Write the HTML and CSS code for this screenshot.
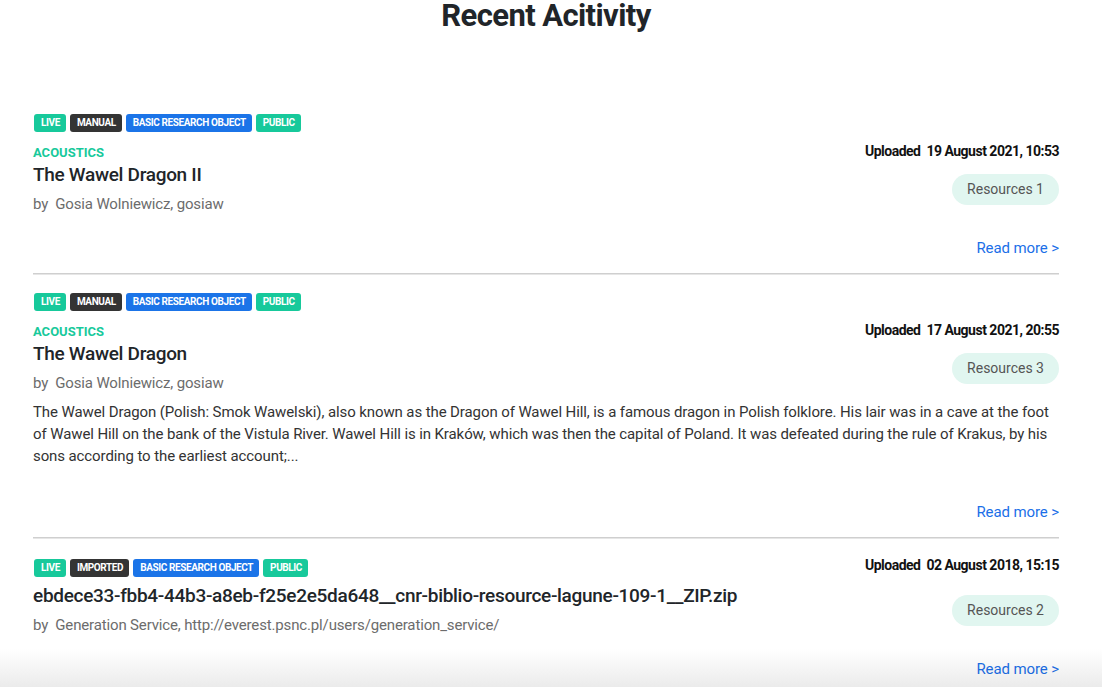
FILE: index.html
```html
<!DOCTYPE html>
<html lang="en">
<head>
<meta charset="utf-8">
<title>Recent Acitivity</title>
<link rel="stylesheet" href="styles.css">
</head>
<body>
<div class="page">
<h1 class="page-title">Recent Acitivity</h1>
<main class="feed">
  <article class="item">
    <div class="item-head">
      <div class="item-main">
        <div class="badges">
          <span class="badge badge-green">Live</span>
          <span class="badge badge-dark">Manual</span>
          <span class="badge badge-blue">Basic Research Object</span>
          <span class="badge badge-green">Public</span>
        </div>
        <div class="category">Acoustics</div>
        <h2 class="item-title">The Wawel Dragon II</h2>
        <p class="byline">by&nbsp; Gosia Wolniewicz, gosiaw</p>
      </div>
      <div class="item-meta">
        <div class="uploaded">Uploaded&nbsp; 19 August 2021, 10:53</div>
        <span class="resources">Resources 1</span>
      </div>
    </div>
    <div class="item-foot item-foot-short"><a class="read-more" href="#">Read more &gt;</a></div>
  </article>
  <hr class="divider">
  <article class="item">
    <div class="item-head">
      <div class="item-main">
        <div class="badges">
          <span class="badge badge-green">Live</span>
          <span class="badge badge-dark">Manual</span>
          <span class="badge badge-blue">Basic Research Object</span>
          <span class="badge badge-green">Public</span>
        </div>
        <div class="category">Acoustics</div>
        <h2 class="item-title">The Wawel Dragon</h2>
        <p class="byline">by&nbsp; Gosia Wolniewicz, gosiaw</p>
      </div>
      <div class="item-meta">
        <div class="uploaded">Uploaded&nbsp; 17 August 2021, 20:55</div>
        <span class="resources">Resources 3</span>
      </div>
    </div>
    <p class="desc">The Wawel Dragon (Polish: Smok Wawelski), also known as the Dragon of Wawel Hill, is a famous dragon in Polish folklore. His lair was in a cave at the foot of Wawel Hill on the bank of the Vistula River. Wawel Hill is in Kraków, which was then the capital of Poland. It was defeated during the rule of Krakus, by his sons according to the earliest account;...</p>
    <div class="item-foot"><a class="read-more" href="#">Read more &gt;</a></div>
  </article>
  <hr class="divider">
  <article class="item">
    <div class="item-head">
      <div class="item-main">
        <div class="badges">
          <span class="badge badge-green">Live</span>
          <span class="badge badge-dark">Imported</span>
          <span class="badge badge-blue">Basic Research Object</span>
          <span class="badge badge-green">Public</span>
        </div>
        <h2 class="item-title item-title-nocat">ebdece33-fbb4-44b3-a8eb-f25e2e5da648__cnr-biblio-resource-lagune-109-1__ZIP.zip</h2>
        <p class="byline">by&nbsp; Generation Service, http://everest.psnc.pl/users/generation_service/</p>
      </div>
      <div class="item-meta item-meta-wide">
        <div class="uploaded">Uploaded&nbsp; 02 August 2018, 15:15</div>
        <span class="resources">Resources 2</span>
      </div>
    </div>
    <div class="item-foot item-foot-short"><a class="read-more" href="#">Read more &gt;</a></div>
  </article>
</main>
</div>
<div class="fade"></div>
</body>
</html>
```

FILE: styles.css
```css
html, body {
  margin: 0;
  padding: 0;
  background: #ffffff;
}

body {
  font-family: Roboto, "Liberation Sans", Arial, sans-serif;
  color: #212529;
}

.page {
  margin: 0 43px 0 33px;
}

.page-title {
  margin: 0;
  font-size: 31px;
  line-height: 32px;
  font-weight: 700;
  text-align: center;
  color: #212529;
  letter-spacing: -0.6px;
}

.feed {
  margin-top: 82px;
}

.item-head {
  display: flex;
  justify-content: space-between;
  align-items: flex-end;
}

.item-main {
  display: flex;
  flex-direction: column;
  min-width: 0;
}

.badges {
  display: flex;
  gap: 4px;
  padding-left: 1px;
}

.badge {
  display: inline-block;
  height: 18px;
  line-height: 18px;
  padding: 0 6px 0 7px;
  border-radius: 3px;
  font-size: 10px;
  font-weight: 700;
  letter-spacing: -0.4px;
  text-transform: uppercase;
  color: #ffffff;
}

.badge-green { background: #17c99b; }
.badge-dark { background: #343434; }
.badge-blue { background: #1b74e8; }

.category {
  margin-top: 13px;
  font-size: 13px;
  line-height: 16px;
  font-weight: 700;
  text-transform: uppercase;
  color: #17c99b;
}

.item-title {
  margin: 2px 0 0;
  font-size: 19px;
  line-height: 24px;
  font-weight: 500;
  letter-spacing: -0.3px;
  color: #212529;
}

.item-title-nocat {
  margin-top: 7px;
}

.byline {
  margin: 6px 0 0;
  font-size: 15px;
  line-height: 22px;
  letter-spacing: -0.15px;
  color: #6c6c6c;
}

.item-meta {
  display: flex;
  flex-direction: column;
  align-items: flex-end;
  gap: 15px;
  padding-bottom: 10px;
  flex-shrink: 0;
}

.item-meta-wide {
  gap: 22px;
}

.uploaded {
  font-size: 14px;
  line-height: 16px;
  font-weight: 700;
  letter-spacing: -0.5px;
  color: #111;
}

.resources {
  display: inline-block;
  height: 31px;
  line-height: 31px;
  padding: 0 15px;
  border-radius: 16px;
  background: #e1f6f0;
  color: #555;
  font-size: 14px;
}

.desc {
  margin: 7px 0 0;
  font-size: 15px;
  line-height: 22px;
  letter-spacing: -0.1px;
  color: #333;
}

.item-foot {
  display: flex;
  justify-content: flex-end;
  margin-top: 35px;
}

.item-foot-short {
  margin-top: 23px;
}

.read-more {
  font-size: 15px;
  line-height: 20px;
  letter-spacing: -0.1px;
  color: #1b6fe8;
  text-decoration: none;
}

.divider {
  margin: 15px 0 18px;
  border: 0;
  border-top: 1px solid #cfcfcf;
  border-bottom: 1px solid #e6e6e6;
  height: 0;
}

.fade {
  position: fixed;
  left: 0;
  right: 0;
  bottom: 0;
  height: 38px;
  background: linear-gradient(to bottom, #ffffff, #ebebeb);
  mix-blend-mode: multiply;
  pointer-events: none;
}
```
